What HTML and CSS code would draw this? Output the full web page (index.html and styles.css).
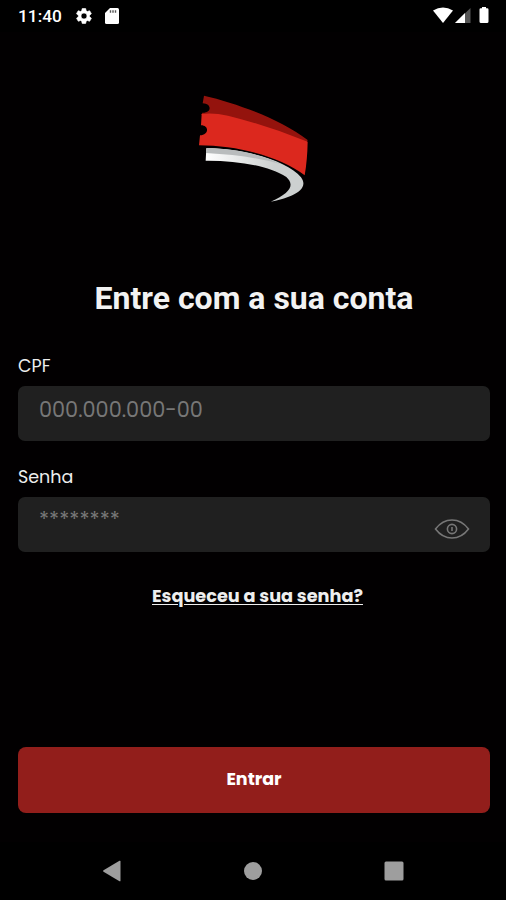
FILE: index.html
```html
<!DOCTYPE html>
<html lang="pt-BR">
<head>
    <meta charset="UTF-8">
    <meta name="viewport" content="width=device-width, initial-scale=1.0">
    <title>Entrar</title>
    <link rel="stylesheet" href="styles.css">
</head>
<body>
    <div class="screen">
        <header class="status-bar">
            <span class="clock">11:40</span>
            <svg class="icon-gear" width="18" height="18" viewBox="0 0 24 24" fill="#fff" stroke="#fff" stroke-width=".8">
                <path d="M19.400 13c0-.3.1-.7.1-1s0-.7-.1-1l2.200-1.700c.2-.2.200-.4.100-.6l-2-3.500c-.1-.2-.4-.3-.6-.2l-2.600 1c-.5-.4-1.100-.7-1.700-1l-.4-2.600c0-.3-.2-.4-.5-.4h-4c-.3 0-.5.200-.5.400L9 5c-.6.300-1.200.600-1.700 1l-2.600-1c-.2-.1-.5 0-.6.200l-2 3.500c-.1.200-.1.400.1.600L4.500 11c0 .3-.1.700-.1 1s0 .7.100 1l-2.200 1.700c-.2.100-.2.400-.1.600l2 3.500c.1.200.4.300.6.200l2.500-1c.5.400 1.100.7 1.700 1l.4 2.600c0 .2.200.4.500.4h4c.3 0 .5-.2.500-.4l.4-2.600c.6-.3 1.200-.6 1.700-1l2.600 1c.2.100.5 0 .6-.2l2-3.500c.1-.2.100-.5-.1-.6L19.400 13zM12 16a4 4 0 1 1 0-8 4 4 0 0 1 0 8z"/>
            </svg>
            <svg class="icon-card" width="14" height="16" viewBox="0 0 14 16">
                <path d="M5 0h7.500Q14 0 14 1.500v13q0 1.500-1.500 1.500h-11Q0 16 0 14.500V5z" fill="#fff"/>
                <path d="M5.500 2.300v2.400M8 2.300v2.400M10.500 2.300v2.400" stroke="#555" stroke-width="1.400"/>
            </svg>
            <svg class="icon-signals" width="58" height="18" viewBox="0 0 58 18">
                <path d="M0 3.500Q10 -2.500 20 3.500L10 16z" fill="#fff"/>
                <path d="M22 16 37.500 1v15z" fill="#555"/>
                <path d="M22 16 32 6v10z" fill="#fff"/>
                <path d="M49 0h4v1.200h1.200q1.300 0 1.300 1.300v12q0 1.500-1.500 1.500h-6q-1.500 0-1.500-1.500v-12q0-1.300 1.300-1.300H49z" fill="#fff"/>
            </svg>
        </header>

        <main class="login">
            <svg class="logo" width="140" height="130" viewBox="-2 0 420 390">
                <defs>
                    <linearGradient id="silver" x1="0" y1="0" x2="1" y2="0">
                        <stop offset="0" stop-color="#fff"/>
                        <stop offset=".4" stop-color="#e2e4e4"/>
                        <stop offset=".7" stop-color="#cdd0d0"/>
                    </linearGradient>
                </defs>
                <path d="M58 32C160 55 290 105 369 165L366 174C270 140 160 110 50 90L53 83C82 84 82 56 54 55z" fill="#94130d"/>
                <path d="M51 87Q85 82 130 92Q250 122 369 170Q368 225 360 271C290 216 160 181 43 181L46 151C73 150 74 121 49 121z" fill="#dc281e"/>
                <path d="M65 190C180 190 310 228 349 277C380 318 304 342 258 350C320 323 330 299 305 276C250 240 150 226 63 227z" fill="url(#silver)"/>
                <path d="M65 190C150 189 235 210 290 238Q200 211 64 204z" fill="#b9bcbd"/>
            </svg>

            <h1>Entre com a sua conta</h1>

            <form class="form">
                <label for="cpf">CPF</label>
                <div class="field">
                    <input id="cpf" type="text" placeholder="000.000.000-00">
                </div>

                <label for="senha">Senha</label>
                <div class="field">
                    <input id="senha" class="password" type="password" placeholder="********">
                    <svg class="icon-eye" width="36" height="22" viewBox="0 0 36 22" fill="none" stroke="#777" stroke-width="1.600">
                        <path d="M1.500 11C6 5 11.500 2 18 2s12 3 16.500 9C30 17 24.500 20 18 20S6 17 1.500 11z"/>
                        <circle cx="18" cy="11" r="4.600"/>
                        <path d="M18 9v4"/>
                    </svg>
                </div>

                <a class="forgot" href="#">Esqueceu a sua senha?</a>
                <button type="button">Entrar</button>
            </form>
        </main>

        <nav class="nav-bar">
            <svg width="20" height="22" viewBox="0 0 20 22" fill="#9e9e9e"><path d="M1.500 10.300 17.500.8q1-.5 1 .7v19q0 1.200-1 .7L1.500 11.700q-1-.7 0-1.400z"/></svg>
            <svg width="20" height="22" viewBox="0 0 20 22" fill="#9e9e9e"><circle cx="10" cy="11" r="9"/></svg>
            <svg width="20" height="22" viewBox="0 0 20 22" fill="#9e9e9e"><rect x=".5" y="1.500" width="19" height="19" rx="1.500"/></svg>
        </nav>
    </div>
</body>
</html>
```

FILE: styles.css
```css
* {
    box-sizing: border-box;
}
body {
    margin: 0;
    background-color: #020001;
    color: #eee;
    font-family: Poppins, Inter, sans-serif;
}
.screen {
    display: flex;
    flex-direction: column;
    height: 900px;
    overflow: hidden;
}
.status-bar {
    display: flex;
    align-items: center;
    height: 32px;
    padding: 0 15px 0 18px;
    background-color: #000;
}
.clock {
    width: 57px;
    font: 500 17.3px Roboto, sans-serif;
    color: #fff;
}
.icon-card {
    margin-left: 12px;
}
.icon-signals {
    margin-left: auto;
}
.login {
    flex: 1;
    padding: 53px 16px 0 18px;
}
.logo {
    display: block;
    margin: 0 auto;
}
h1 {
    margin: 63px 0 0;
    font: bold 32px/40px Roboto, sans-serif;
    text-align: center;
    color: #f2f2f2;
}
.form {
    display: flex;
    flex-direction: column;
    padding-top: 35px;
}
label {
    height: 33px;
    font-size: 17.5px;
    line-height: 26px;
}
.field {
    display: flex;
    align-items: center;
    height: 55px;
    margin-bottom: 23px;
    padding: 0 20px 0 21px;
    border-radius: 7px;
    background-color: #202020;
}
input {
    flex: 1;
    min-width: 0;
    height: 55px;
    padding: 0 0 9px;
    border: 0;
    outline: 0;
    background: transparent;
    color: #eee;
    font: 20.8px Poppins, Inter, sans-serif;
}
input::placeholder {
    color: #777;
    opacity: 1;
}
.password {
    padding-bottom: 11px;
}
.icon-eye {
    margin-top: 8px;
}
.forgot {
    height: 30px;
    margin-top: 8px;
    padding-left: 7px;
    font-size: 17.7px;
    font-weight: 700;
    line-height: 26px;
    text-align: center;
    color: #eee;
    text-underline-offset: 2px;
}
button {
    height: 66px;
    margin-top: 134px;
    padding-bottom: 3px;
    border: 0;
    border-radius: 8px;
    background-color: #921e1b;
    color: #fff;
    font: 700 17.5px Poppins, Inter, sans-serif;
}
.nav-bar {
    display: flex;
    justify-content: space-between;
    align-items: center;
    height: 58px;
    padding: 0 102px;
    background-color: #000;
}
```
